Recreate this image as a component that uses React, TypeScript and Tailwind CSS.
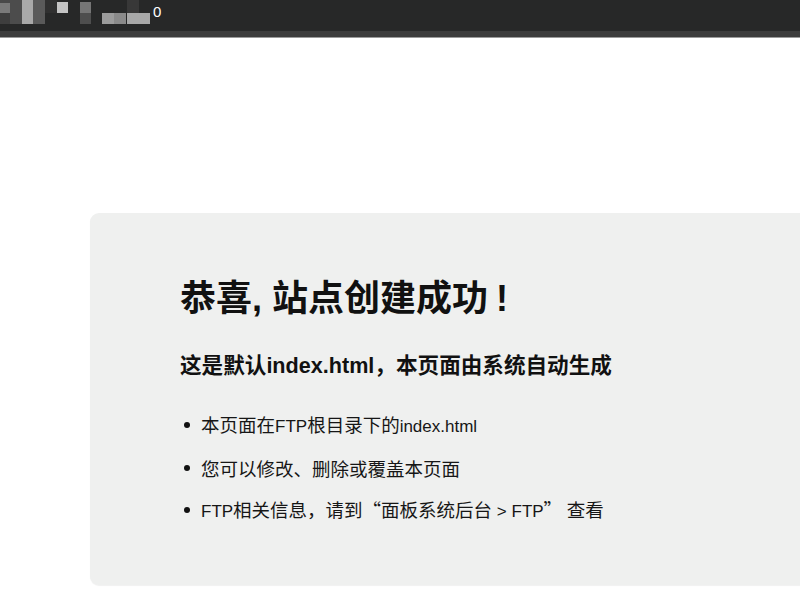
import React from 'react';

// Blurred (mosaic) address bar content, drawn as blocks
function MosaicTitle() {
  return (
    <svg width="152" height="26" viewBox="0 0 152 26" className="block">
      <rect x="0" y="0" width="10" height="3" fill="#4a4a4a" />
      <rect x="0" y="3" width="10" height="10" fill="#7a7a7a" />
      <rect x="0" y="13" width="10" height="11" fill="#3e3e3e" />
      <rect x="10" y="0" width="12" height="24" fill="#4c4c4c" />
      <rect x="22" y="0" width="11" height="24" fill="#a9a9a9" />
      <rect x="33" y="0" width="12" height="24" fill="#5a5a5a" />
      <rect x="45" y="0" width="12" height="13" fill="#303030" />
      <rect x="57" y="2" width="11" height="11" fill="#c4c4c4" />
      <rect x="80" y="2" width="11" height="11" fill="#767676" />
      <rect x="80" y="13" width="11" height="11" fill="#4e4e4e" />
      <rect x="127" y="0" width="12" height="13" fill="#383838" />
      <rect x="102" y="13" width="12" height="11" fill="#9c9c9c" />
      <rect x="114" y="13" width="12" height="11" fill="#8a8a8a" />
      <rect x="127" y="13" width="23" height="11" fill="#a8a8a8" />
    </svg>
  );
}

// Latin runs are set a bit smaller than the CJK text, like PingFang does
function Mixed({ text }: { text: string }) {
  const parts = text.split(/([\x20-\x7E]+)/).filter(Boolean);
  return (
    <>
      {parts.map((p, i) =>
        /^[\x20-\x7E]+$/.test(p) ? (
          <span key={i} className="font-['Liberation_Sans',sans-serif] text-[17px] whitespace-pre">
            {p}
          </span>
        ) : (
          <span key={i}>{p}</span>
        )
      )}
    </>
  );
}

const items = [
  '本页面在FTP根目录下的index.html',
  '您可以修改、删除或覆盖本页面',
  'FTP相关信息，请到“面板系统后台 > FTP” 查看',
];

export default function App() {
  return (
    <div className="w-[800px] h-[600px] overflow-hidden bg-white font-['Liberation_Sans','Noto_Sans_CJK_SC',sans-serif] text-[#111]">
      {/* Top bar */}
      <div className="h-[31px] bg-[#272828] flex items-start">
        <MosaicTitle />
        <span className="text-white text-[15px] leading-none mt-[4px] ml-[1px]">0</span>
      </div>
      <div className="h-[6px] bg-[#3c3c3c]" />
      <div className="h-[1px] bg-[#9a9a9a]" />

      {/* Card */}
      <div className="mt-[175px] ml-[90px] w-[760px] rounded-[9px] bg-[#eff0ef] shadow-[0_1px_1px_rgba(0,0,0,0.06)] pl-[90px] pt-[66px] pb-[53px]">
        <h1 className="text-[36px] leading-[40px] font-bold">
          恭喜, 站点创建成功<span className="ml-[8px]">!</span>
        </h1>
        <h2 className="mt-[33px] text-[21.6px] leading-[28px] font-bold">
          这是默认index.html，本页面由系统自动生成
        </h2>
        <ul className="mt-[24px] pl-[4px]">
          {items.map((t) => (
            <li
              key={t}
              className="h-[42.5px] flex items-center gap-[11px] font-['Noto_Sans_CJK_SC',sans-serif] text-[18.5px] leading-none text-[#161616]"
            >
              <span className="w-[6px] h-[6px] rounded-full bg-[#111] shrink-0" />
              <span>
                <Mixed text={t} />
              </span>
            </li>
          ))}
        </ul>
      </div>
    </div>
  );
}
